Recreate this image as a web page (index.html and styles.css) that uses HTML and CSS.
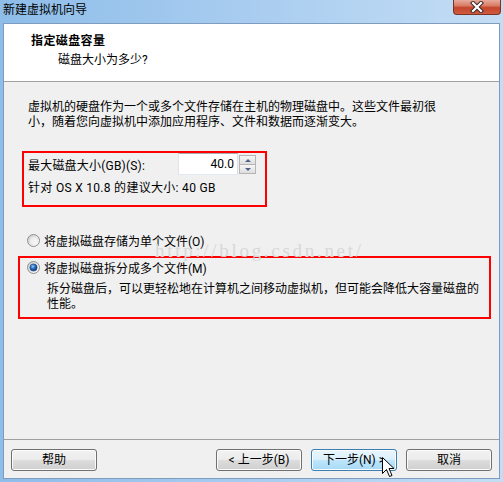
FILE: index.html
```html
<!DOCTYPE html>
<html lang="zh-CN">
<head>
<meta charset="utf-8">
<title>新建虚拟机向导</title>
<link rel="stylesheet" href="styles.css">
</head>
<body>
<div class="window">
  <div class="titlebar">
    <span class="title">新建虚拟机向导</span>
    <div class="close">
      <svg width="16" height="12" viewBox="0 0 16 12">
        <path d="M4 2 L12 10 M12 2 L4 10" stroke="#3a2a28" stroke-width="4.2" stroke-linecap="square" fill="none"/>
        <path d="M4 2 L12 10 M12 2 L4 10" stroke="#ffffff" stroke-width="2.2" stroke-linecap="square" fill="none"/>
      </svg>
    </div>
  </div>
  <div class="client">
    <div class="header">
      <div class="h-title">指定磁盘容量</div>
      <div class="h-sub">磁盘大小为多少?</div>
    </div>
    <div class="content">
      <p class="intro">虚拟机的硬盘作为一个或多个文件存储在主机的物理磁盘中。这些文件最初很<br>小，随着您向虚拟机中添加应用程序、文件和数据而逐渐变大。</p>
      <div class="box size-box">
        <div class="size-row">
          <span class="label">最大磁盘大小(GB)(S):</span>
          <div class="spin-input">
            <span class="field">40.0</span>
            <div class="spinner">
              <span class="sp up"></span>
              <span class="sp down"></span>
            </div>
          </div>
        </div>
        <div class="hint">针对 OS X 10.8 的建议大小: 40 GB</div>
      </div>
      <div class="radio-row single">
        <svg class="radio" width="13" height="13" viewBox="0 0 13 13">
          <defs>
            <linearGradient id="rg1" x1="0" y1="0" x2="1" y2="1">
              <stop offset="0" stop-color="#c9c9c9"/>
              <stop offset="1" stop-color="#ffffff"/>
            </linearGradient>
            <linearGradient id="rg1b" x1="0" y1="0" x2="1" y2="1">
              <stop offset="0" stop-color="#e6e6e6"/>
              <stop offset="1" stop-color="#fbfbfb"/>
            </linearGradient>
          </defs>
          <circle cx="6.5" cy="6.5" r="6" fill="url(#rg1)" stroke="#8e8f8f"/>
          <circle cx="6.5" cy="6.5" r="3.6" fill="url(#rg1b)"/>
        </svg>
        <span>将虚拟磁盘存储为单个文件(O)</span>
      </div>
      <div class="box split-box">
        <div class="radio-row">
          <svg class="radio" width="13" height="13" viewBox="0 0 13 13">
            <defs>
              <linearGradient id="rg2" x1="0" y1="0" x2="1" y2="1">
                <stop offset="0" stop-color="#c9c9c9"/>
                <stop offset="1" stop-color="#ffffff"/>
              </linearGradient>
              <radialGradient id="dot" cx="0.4" cy="0.35" r="0.7">
                <stop offset="0" stop-color="#8fd0ff"/>
                <stop offset="0.45" stop-color="#2a6fc0"/>
                <stop offset="1" stop-color="#0d2f66"/>
              </radialGradient>
            </defs>
            <circle cx="6.5" cy="6.5" r="6" fill="url(#rg2)" stroke="#8e8f8f"/>
            <circle cx="6.5" cy="6.5" r="3.6" fill="url(#dot)" stroke="#193f7a" stroke-width="0.6"/>
          </svg>
          <span>将虚拟磁盘拆分成多个文件(M)</span>
        </div>
        <div class="desc">拆分磁盘后，可以更轻松地在计算机之间移动虚拟机，但可能会降低大容量磁盘的<br>性能。</div>
      </div>
      <div class="watermark">http://blog.csdn.net/</div>
    </div>
    <div class="footer">
      <button class="btn">帮助</button>
      <button class="btn back">&lt; 上一步(B)</button>
      <button class="btn hot">下一步(N) &gt;</button>
      <button class="btn">取消</button>
    </div>
  </div>
  <svg class="cursor" width="13" height="21" viewBox="0 0 13 21">
    <path d="M0.5 0.5 V16.5 L4.5 12.5 L7.5 19.5 L10 18.5 L7 11.5 H12 Z" fill="#ffffff" stroke="#000000" stroke-width="1" stroke-linejoin="miter"/>
  </svg>
</div>
</body>
</html>
```
FILE: styles.css
```css
html, body {
  margin: 0;
  padding: 0;
  background: #ffffff;
}

.window {
  position: relative;
  width: 503px;
  height: 482px;
  box-sizing: border-box;
  padding: 0 3px 3px;
  display: flex;
  flex-direction: column;
  overflow: hidden;
  background: linear-gradient(to right, #8ebde9 0%, #a6cbef 45%, #b9d7f3 80%, #c4ddf4 100%);
  font-family: Roboto, "Noto Sans CJK SC", sans-serif;
  font-size: 12px;
  color: #000;
}

.titlebar {
  height: 23px;
  display: flex;
  align-items: flex-start;
  margin-right: -1px;
}

.title {
  line-height: 21px;
  color: #000;
}

.close {
  margin-left: auto;
  width: 48px;
  height: 15px;
  box-sizing: border-box;
  border: 1px solid #7a3426;
  border-top: none;
  border-radius: 0 0 4px 4px;
  background: linear-gradient(#e7ab9c 0%, #d97c66 40%, #c4452c 55%, #cf5b3f 100%);
  display: flex;
  align-items: center;
  justify-content: center;
}

.client {
  flex: 1;
  display: flex;
  flex-direction: column;
  border: 1px solid #7e9cbd;
  background: #f0f0f0;
  min-height: 0;
}

.header {
  height: 58px;
  box-sizing: border-box;
  background: #ffffff;
  border-bottom: 1px solid #a0a0a0;
  padding: 9px 0 0 27px;
}

.h-title {
  font-weight: bold;
  line-height: 16px;
  letter-spacing: 0.4px;
}

.h-sub {
  line-height: 16px;
  margin-top: 3px;
  padding-left: 27px;
}

.content {
  flex: 1;
  position: relative;
  padding: 18px 8px 0 14px;
}

.intro {
  margin: 0 0 0 10px;
  line-height: 15px;
  white-space: nowrap;
}

.box {
  border: 2px solid #ff0000;
}

.size-box {
  width: 245px;
  box-sizing: border-box;
  margin: 21px 0 0 4px;
  padding: 0 0 9px 4px;
}

.size-row {
  display: flex;
  align-items: center;
  height: 22px;
}

.label {
  width: 150px;
  white-space: nowrap;
  letter-spacing: 0.2px;
}

.spin-input {
  display: flex;
  align-items: center;
}

.field {
  width: 60px;
  height: 22px;
  box-sizing: border-box;
  border: 1px solid;
  border-color: #abadb3 #dbdfe6 #e3e9ef #e2e3ea;
  background: #ffffff;
  text-align: right;
  padding-right: 3px;
  line-height: 20px;
}

.spinner {
  margin-left: 1px;
  width: 17px;
  height: 19px;
  display: flex;
  flex-direction: column;
}

.sp {
  flex: 1;
  position: relative;
  border: 1px solid #b5b5b5;
  background: linear-gradient(#f6f6f6, #dedede);
}

.sp.down {
  margin-top: -1px;
}

.sp::after {
  content: "";
  position: absolute;
  left: 5px;
  top: 3px;
  border-left: 3px solid transparent;
  border-right: 3px solid transparent;
}

.sp.up::after {
  border-bottom: 3px solid #4c6389;
}

.sp.down::after {
  border-top: 3px solid #4c6389;
}

.hint {
  line-height: 16px;
  margin-top: 5px;
  white-space: nowrap;
  letter-spacing: 0.3px;
}

.radio-row {
  display: flex;
  align-items: center;
  height: 16px;
  gap: 4px;
  white-space: nowrap;
}

.radio {
  flex: none;
  display: block;
}

.single {
  margin-top: 25px;
  padding-left: 9px;
}

.split-box {
  margin-top: 8px;
  padding: 1px 0 5px 7px;
}

.desc {
  margin-top: 7px;
  padding-left: 20px;
  line-height: 15px;
  white-space: nowrap;
}

.watermark {
  position: absolute;
  left: 151px;
  top: 159px;
  font-family: "Liberation Serif", serif;
  font-size: 19px;
  line-height: 19px;
  letter-spacing: 2.7px;
  color: #d8d8d8;
  white-space: nowrap;
}

.footer {
  border-top: 1px solid #a0a0a0;
  padding: 9px 7px 7px;
  display: flex;
  gap: 9px;
}

.btn {
  width: 86px;
  height: 22px;
  box-sizing: border-box;
  margin: 0;
  padding: 0;
  border: 1px solid #707070;
  border-radius: 3px;
  background: linear-gradient(#f2f2f2 0%, #ebebeb 50%, #dddddd 51%, #cfcfcf 100%);
  box-shadow: inset 0 0 0 1px #fbfbfb;
  font-family: inherit;
  font-size: 12px;
  color: #000;
  line-height: 18px;
}

.back {
  margin-left: auto;
}

.hot {
  border-color: #3c7fb1;
  background: linear-gradient(#eaf6fd 0%, #d9f0fc 50%, #bee6fd 51%, #a7d9f5 100%);
}

.cursor {
  position: absolute;
  left: 382px;
  top: 457px;
}
```
